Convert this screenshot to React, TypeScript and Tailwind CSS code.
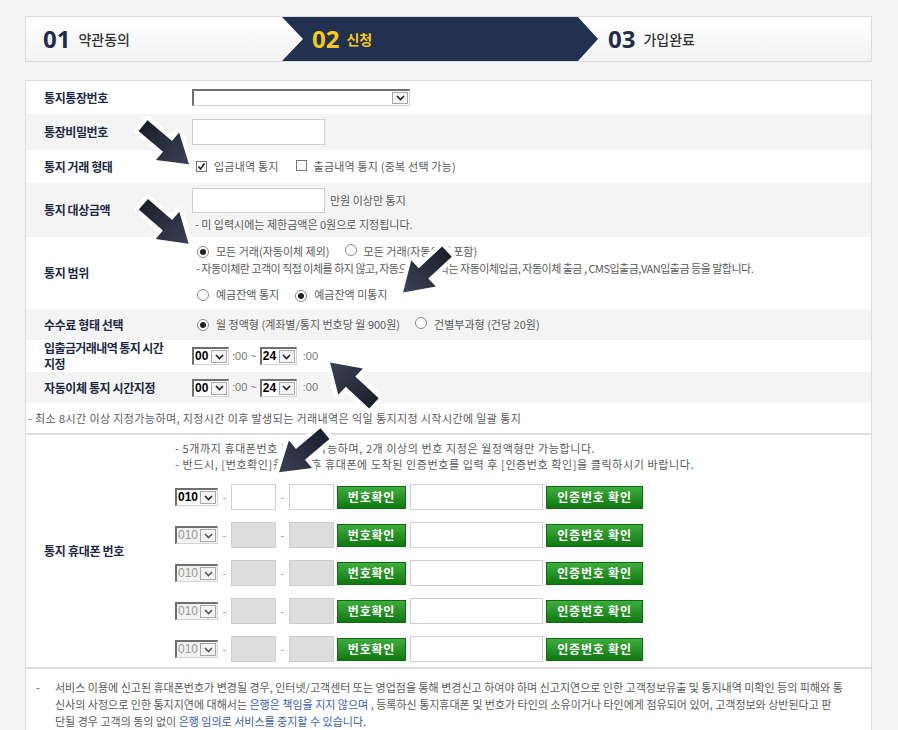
import React from 'react';

const Chevron = ({ dim }: { dim?: boolean }) => (
    <svg width="9" height="6" viewBox="0 0 9 6">
        <path d="M1 1 L4.5 4.5 L8 1" fill="none" stroke={dim ? "#555" : "#222"} strokeWidth="1.6"/>
    </svg>
);

const FakeSelect = ({ value, disabled, wide }: { value: string; disabled?: boolean; wide?: boolean }) => (
    <div className={(wide ? "w-[218px] h-[17px] " : "w-[43px] h-[18px] ") + "flex border-t-2 border-l-2 border-t-[#6f6f6f] border-l-[#6f6f6f] border-r border-b border-r-[#d4d4d4] border-b-[#d4d4d4] " + (disabled ? "bg-[#f2f2f2]" : "bg-white")}>
        <span className={"flex-1 pl-[1px] text-[12px] leading-[15px] tracking-normal font-['Liberation_Sans',sans-serif] " + (disabled ? "text-[#999]" : "font-bold text-black")}>{value}</span>
        <span className="w-[16px] my-[1px] mr-[1px] border border-[#a9a9a9] bg-[#f4f4f4] flex items-center justify-center">
            <Chevron dim={disabled}/>
        </span>
    </div>
);

const TimeSelect = ({ value }: { value: string }) => (
    <div className="flex w-[37px] h-[18px] border-t-2 border-l-2 border-t-[#6f6f6f] border-l-[#6f6f6f] border-r border-b border-r-[#d4d4d4] border-b-[#d4d4d4] bg-white">
        <span className="flex-1 pl-[1px] text-[12px] leading-[15px] font-bold font-['Liberation_Sans',sans-serif] text-black">{value}</span>
        <span className="w-[16px] my-[1px] mr-[1px] border border-[#a9a9a9] bg-[#f4f4f4] flex items-center justify-center">
            <Chevron/>
        </span>
    </div>
);

const Check = ({ on }: { on?: boolean }) => (
    <span className="inline-flex w-[11px] h-[11px] border border-[#777] bg-white items-center justify-center mr-[7px]">
        {on && <svg width="9" height="9" viewBox="0 0 9 9"><path d="M1.5 4.5 L3.5 7 L7.5 1.5" fill="none" stroke="#222" strokeWidth="1.6"/></svg>}
    </span>
);

const Radio = ({ on }: { on?: boolean }) => (
    <span className="inline-flex w-[12px] h-[12px] rounded-full border border-[#8a8a8a] bg-white items-center justify-center mr-[7px]">
        {on && <span className="w-[6px] h-[6px] rounded-full bg-[#222]"/>}
    </span>
);

const GreenBtn = ({ text, wide }: { text: string; wide?: boolean }) => (
    <div className={(wide ? "w-[97px] ml-[3px] " : "w-[69px] ml-[3px] ") + "h-[23px] flex items-center justify-center bg-gradient-to-b from-[#3cae3c] to-[#0f780f] border border-[#0d6a0d] text-white text-[12px] font-bold tracking-[0.8px]"}>
        {text}
    </div>
);

const Arrow = ({ className }: { className: string }) => (
    <svg className={"absolute " + className} width="72" height="48" viewBox="-6 -6 72 48">
        <defs>
            <linearGradient id="ag" x1="0" y1="0" x2="1" y2="0">
                <stop offset="0" stopColor="#1b1f2b"/>
                <stop offset="1" stopColor="#3c4256"/>
            </linearGradient>
        </defs>
        <path d="M0 11 L32 11 L32 0 L60 18 L32 36 L32 25 L0 25 Z" fill="url(#ag)" stroke="#fff" strokeWidth="9" strokeLinejoin="round" paintOrder="stroke"/>
    </svg>
);

const phones = [0, 1, 2, 3, 4];

const App = () => {
    return (
        <div className="relative min-h-screen bg-[#f4f4f4] pt-[16px] pl-[25px] pb-[20px] font-['Noto_Sans_CJK_KR',sans-serif] text-[#5a5a5a]">
            {/* steps */}
            <div className="flex w-[847px] h-[46px] border border-[#dcdcdc] bg-gradient-to-b from-white to-[#f3f3f3]">
                <div className="w-[256px] flex items-center pl-[17px]">
                    <span className="font-['Open_Sans',sans-serif] font-bold text-[24px] text-[#1f2d4a]">01</span>
                    <span className="ml-[8px] text-[14px] font-medium text-[#333]">약관동의</span>
                </div>
                <div className="relative z-10 w-[316px] -mr-[20px] flex items-center pl-[30px] bg-[#22314f] [clip-path:polygon(0_0,296px_0,100%_50%,296px_100%,0_100%,21px_50%)]">
                    <span className="font-['Open_Sans',sans-serif] font-bold text-[24px] text-[#f6c91a]">02</span>
                    <span className="ml-[7px] text-[14px] font-bold text-[#f6c91a]">신청</span>
                </div>
                <div className="flex-1 flex items-center pl-[30px]">
                    <span className="font-['Open_Sans',sans-serif] font-bold text-[24px] text-[#1f2d4a]">03</span>
                    <span className="ml-[8px] text-[14px] font-medium text-[#333]">가입완료</span>
                </div>
            </div>

            {/* form */}
            <div className="mt-[18px] w-[847px] border border-[#dcdcdc] bg-white text-[11px]">
                <div className="flex items-center h-[33px] bg-white">
                    <div className="w-[166px] pl-[18px] text-[12px] font-bold tracking-[-0.4px] text-[#1e2a44]">통지통장번호</div>
                    <FakeSelect value="" wide/>
                </div>
                <div className="flex items-center h-[36px] bg-[#f4f4f4]">
                    <div className="w-[166px] pl-[18px] text-[12px] font-bold tracking-[-0.4px] text-[#1e2a44]">통장비밀번호</div>
                    <div className="w-[133px] h-[26px] border border-[#cfcfcf] bg-white"/>
                </div>
                <div className="flex items-center h-[33px] bg-white">
                    <div className="w-[166px] pl-[18px] text-[12px] font-bold tracking-[-0.4px] text-[#1e2a44]">통지 거래 형태</div>
                    <div className="flex items-center pl-[4px] tracking-[0.2px]">
                        <Check on/>
                        <span>입금내역 통지</span>
                        <span className="ml-[17px]"><Check/></span>
                        <span>출금내역 통지 (중복 선택 가능)</span>
                    </div>
                </div>
                <div className="flex items-center h-[54px] bg-[#f4f4f4]">
                    <div className="w-[166px] pl-[18px] text-[12px] font-bold tracking-[-0.4px] text-[#1e2a44]">통지 대상금액</div>
                    <div className="flex flex-col">
                        <div className="flex items-center">
                            <div className="w-[133px] h-[25px] border border-[#cfcfcf] bg-white"/>
                            <span className="ml-[5px]">만원 이상만 통지</span>
                        </div>
                        <div className="mt-[3px] h-[16px] leading-[16px] pl-[3px]">- 미 입력시에는 제한금액은 0원으로 지정됩니다.</div>
                    </div>
                </div>
                <div className="flex items-center h-[72px] bg-white">
                    <div className="w-[166px] pl-[18px] text-[12px] font-bold tracking-[-0.4px] text-[#1e2a44]">통지 범위</div>
                    <div className="flex flex-col">
                        <div className="flex items-center h-[16px] pl-[5px]">
                            <Radio on/>
                            <span>모든 거래(자동이체 제외)</span>
                            <span className="ml-[15px]"><Radio/></span>
                            <span>모든 거래(자동이체 포함)</span>
                        </div>
                        <div className="h-[16px] leading-[16px] pl-[4px] whitespace-nowrap tracking-[-0.5px]">- 자동이체란 고객이 직접 이체를 하지 않고, 자동으로 처리되는 자동이체입금, 자동이체 출금 , CMS입출금,VAN입출금 등을 말합니다.</div>
                        <div className="flex items-center h-[16px] mt-[11px] pl-[5px]">
                            <Radio/>
                            <span>예금잔액 통지</span>
                            <span className="ml-[16px]"><Radio on/></span>
                            <span>예금잔액 미통지</span>
                        </div>
                    </div>
                </div>
                <div className="flex items-center h-[31px] bg-[#f4f4f4]">
                    <div className="w-[166px] pl-[18px] text-[12px] font-bold tracking-[-0.4px] text-[#1e2a44]">수수료 형태 선택</div>
                    <div className="flex items-center pl-[5px]">
                        <Radio on/>
                        <span>월 정액형 (계좌별/통지 번호당 월 900원)</span>
                        <span className="ml-[15px]"><Radio/></span>
                        <span>건별부과형 (건당 20원)</span>
                    </div>
                </div>
                <div className="flex items-center h-[32px] bg-white">
                    <div className="w-[166px] pl-[18px] text-[12px] leading-[16px] font-bold tracking-[-0.6px] text-[#1e2a44]">
                        <div>입출금거래내역 통지 시간</div>
                        <div>지정</div>
                    </div>
                    <div className="flex items-center text-[#777] font-['Liberation_Sans',sans-serif]">
                        <TimeSelect value="00"/>
                        <span className="ml-[3px]">:00 ~</span>
                        <span className="ml-[3px]"><TimeSelect value="24"/></span>
                        <span className="ml-[6px]">:00</span>
                    </div>
                </div>
                <div className="flex items-center h-[31px] bg-[#f4f4f4]">
                    <div className="w-[166px] pl-[18px] text-[12px] font-bold tracking-[-0.4px] text-[#1e2a44]">자동이체 통지 시간지정</div>
                    <div className="flex items-center text-[#777] font-['Liberation_Sans',sans-serif]">
                        <TimeSelect value="00"/>
                        <span className="ml-[3px]">:00 ~</span>
                        <span className="ml-[3px]"><TimeSelect value="24"/></span>
                        <span className="ml-[6px]">:00</span>
                    </div>
                </div>
                <div className="flex items-center h-[32px] bg-white pl-[2px] tracking-[0.4px] border-b-2 border-[#dedede]">
                    - 최소 8시간 이상 지정가능하며, 지정시간 이후 발생되는 거래내역은 익일 통지지정 시작시간에 일괄 통지
                </div>

                {/* phone */}
                <div className="flex bg-white border-b-2 border-[#dedede]">
                    <div className="w-[149px] pl-[18px] flex items-center text-[12px] font-bold tracking-[-0.3px] text-[#1e2a44]">통지 휴대폰 번호</div>
                    <div className="flex flex-col pt-[5px] pb-[5px]">
                        <div className="h-[16px] leading-[16px] tracking-[0.6px]">- 5개까지 휴대폰번호 지정이 가능하며, 2개 이상의 번호 지정은 월정액형만 가능합니다.</div>
                        <div className="h-[16px] leading-[16px] tracking-[0.6px]">- 반드시, [번호확인]을 누른 후 휴대폰에 도착된 인증번호를 입력 후 [인증번호 확인]을 클릭하시기 바랍니다.</div>
                        <div className="flex flex-col gap-[12px] mt-[12px]">
                            {phones.map((p) => (
                                <div key={p} className="flex items-center h-[26px]">
                                    <FakeSelect value="010" disabled={p > 0}/>
                                    <span className="w-[13px] text-center text-[#999]">-</span>
                                    <div className={"w-[45px] h-[26px] border border-[#cfcfcf] " + (p > 0 ? "bg-[#dddddd]" : "bg-white")}/>
                                    <span className="w-[13px] text-center text-[#999]">-</span>
                                    <div className={"w-[45px] h-[26px] border border-[#cfcfcf] " + (p > 0 ? "bg-[#dddddd]" : "bg-white")}/>
                                    <GreenBtn text="번호확인"/>
                                    <div className="ml-[4px] w-[133px] h-[26px] border border-[#cfcfcf] bg-white"/>
                                    <GreenBtn text="인증번호 확인" wide/>
                                </div>
                            ))}
                        </div>
                    </div>
                </div>

                {/* bottom notes */}
                <div className="flex pl-[10px] pt-[10px] pb-[14px] leading-[17px] whitespace-nowrap">
                    <span className="w-[19px]">-</span>
                    <div>
                        서비스 이용에 신고된 휴대폰번호가 변경될 경우, 인터넷/고객센터 또는 영업점을 통해 변경신고 하여야 하며 신고지연으로 인한 고객정보유출 및 통지내역 미확인 등의 피해와 통<br/>
                        신사의 사정으로 인한 통지지연에 대해서는 <span className="text-[#3a5cab]">은행은 책임을 지지 않으며</span> , 등록하신 통지휴대폰 및 번호가 타인의 소유이거나 타인에게 점유되어 있어, 고객정보와 상반된다고 판<br/>
                        단될 경우 고객의 동의 없이 <span className="text-[#3a5cab]">은행 임의로 서비스를 중지할 수 있습니다.</span>
                    </div>
                </div>
            </div>

            <Arrow className="left-[130px] top-[121px] rotate-[40deg]"/>
            <Arrow className="left-[130px] top-[200px] rotate-[41deg]"/>
            <Arrow className="left-[389px] top-[248px] rotate-[137deg]"/>
            <Arrow className="left-[316px] top-[359px] rotate-[223deg]"/>
            <Arrow className="left-[266px] top-[429px] rotate-[140deg]"/>
        </div>
    );
};

export default App;
